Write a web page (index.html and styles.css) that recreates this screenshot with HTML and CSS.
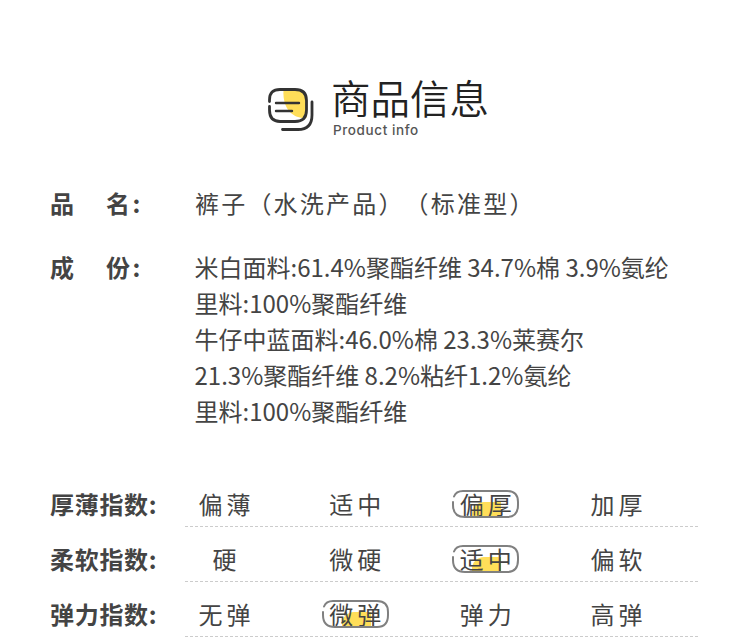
FILE: index.html
```html
<!DOCTYPE html>
<html lang="zh-CN">
<head>
<meta charset="utf-8">
<title>商品信息</title>
<link rel="stylesheet" href="styles.css">
</head>
<body>
<main class="page">
  <header class="head">
    <svg class="logo" width="50" height="50" viewBox="0 0 50 50" aria-hidden="true">
      <path class="logo-fill" d="M18.500 4.500H30C37 4.500 41.500 9 41.500 16V33C32 34 17 28 18.500 4.500Z"/>
      <path class="logo-line" d="M4.500 16.500V15C4.500 8 8 4.500 15 4.500H30C37.500 4.500 41.500 8.500 41.500 15.500V25C41.500 32.500 37.500 36.500 30 36.500H15C8 36.500 4.500 32.500 4.500 25V21.500"/>
      <path class="logo-line" d="M47 17V30C47 40 42 44.500 33 44.500H17.500"/>
      <path class="logo-bar" d="M11 18H34M11 26H27"/>
    </svg>
    <div class="head-text">
      <h1 class="title">商品信息</h1>
      <p class="sub">Product info</p>
    </div>
  </header>

  <dl class="info">
    <div class="info-row">
      <dt class="info-label"><span>品</span><span class="info-tail">名:</span></dt>
      <dd class="info-name">裤子（水洗产品）（标准型）</dd>
    </div>
    <div class="info-row info-row-gap">
      <dt class="info-label"><span>成</span><span class="info-tail">份:</span></dt>
      <dd class="info-text">米白面料:61.4%聚酯纤维 34.7%棉 3.9%氨纶<br>里料:100%聚酯纤维<br>牛仔中蓝面料:46.0%棉 23.3%莱赛尔<br>21.3%聚酯纤维 8.2%粘纤1.2%氨纶<br>里料:100%聚酯纤维</dd>
    </div>
  </dl>

  <section class="index">
    <div class="index-row">
      <div class="index-label">厚薄指数:</div>
      <div class="index-values">
        <span class="opt">偏薄</span>
        <span class="opt">适中</span>
        <span class="opt on"><svg class="pill" width="67" height="28" viewBox="0 0 67 28" aria-hidden="true"><path d="M2 6.500C3.500 2.500 6 1 11 1H55C62 1 66 5 66 12V15C66 23 62 27 55 27H13C5 27 1 23 1 15V12"/></svg>偏厚</span>
        <span class="opt">加厚</span>
      </div>
    </div>
    <div class="index-row">
      <div class="index-label">柔软指数:</div>
      <div class="index-values">
        <span class="opt">硬</span>
        <span class="opt">微硬</span>
        <span class="opt on"><svg class="pill" width="67" height="28" viewBox="0 0 67 28" aria-hidden="true"><path d="M2 6.500C3.500 2.500 6 1 11 1H55C62 1 66 5 66 12V15C66 23 62 27 55 27H13C5 27 1 23 1 15V12"/></svg>适中</span>
        <span class="opt">偏软</span>
      </div>
    </div>
    <div class="index-row">
      <div class="index-label">弹力指数:</div>
      <div class="index-values">
        <span class="opt">无弹</span>
        <span class="opt on"><svg class="pill" width="67" height="28" viewBox="0 0 67 28" aria-hidden="true"><path d="M2 6.500C3.500 2.500 6 1 11 1H55C62 1 66 5 66 12V15C66 23 62 27 55 27H13C5 27 1 23 1 15V12"/></svg>微弹</span>
        <span class="opt">弹力</span>
        <span class="opt">高弹</span>
      </div>
    </div>
  </section>
</main>
</body>
</html>
```
FILE: styles.css
```css
* { box-sizing: border-box; }
html, body { margin: 0; padding: 0; }
body {
  background: #fff;
  color: #444;
  font-family: "Noto Sans CJK SC", "Noto Sans", sans-serif;
  width: 750px;
  height: 642px;
  overflow: hidden;
}
.page { padding: 73px 52px 0 50px; }
.head {
  display: flex;
  align-items: flex-start;
  margin-left: 215px;
  gap: 16px;
}
.logo { margin-top: 12px; flex: none; }
.logo-fill { fill: #ffde59; }
.logo-line { fill: none; stroke: #333; stroke-width: 2.8; stroke-linecap: round; }
.logo-bar { fill: none; stroke: #333; stroke-width: 2.4; stroke-linecap: round; }
.head-text { display: flex; flex-direction: column; }
.title {
  margin: 0;
  font-size: 39.5px;
  line-height: 48px;
  font-weight: 350;
  color: #222;
}
.sub {
  margin: 2px 0 0 2px;
  font-family: Inter, sans-serif;
  font-size: 13.5px;
  line-height: 14px;
  font-weight: 500;
  color: #555;
  letter-spacing: 0.6px;
}
.info { margin: 48px 0 0; }
.info-row { display: flex; align-items: flex-start; }
.info-row-gap { margin-top: 28px; }
.info-label {
  width: 145px;
  flex: none;
  display: flex;
  font-size: 24px;
  line-height: 36px;
  font-weight: 700;
  color: #444;
  letter-spacing: 0.5px;
}
.info-label span:first-child { width: 56px; }
.info-tail { letter-spacing: 2.5px; }
.info-name {
  margin: 0;
  font-size: 24px;
  line-height: 36px;
  letter-spacing: 2.2px;
  text-spacing-trim: space-all;
  font-feature-settings: "chws" 0, "palt" 0;
}
.info-text {
  margin: 0 0 0 -0.5px;
  font-size: 24px;
  line-height: 36px;
}
.index { margin-top: 43px; }
.index-row { display: flex; height: 55px; }
.index-label {
  width: 135px;
  flex: none;
  font-size: 24px;
  line-height: 36px;
  font-weight: 700;
  padding-top: 14px;
  letter-spacing: 0.7px;
}
.index-values {
  width: 513px;
  display: grid;
  grid-template-columns: repeat(4, 80px);
  column-gap: 50.67px;
  align-items: start;
  height: 55px;
  padding-top: 14px;
  border-bottom: 1px dashed #ccc;
}
.opt {
  position: relative;
  text-align: center;
  font-size: 24px;
  line-height: 36px;
  letter-spacing: 4px;
  padding-left: 3px;
  z-index: 0;
}
.on::before {
  content: "";
  position: absolute;
  z-index: -1;
  left: 26px;
  bottom: 6px;
  width: 29px;
  height: 14px;
  background: #ffde59;
  border-radius: 12px 0 0 0;
}
.pill {
  position: absolute;
  left: 6px;
  top: 4px;
  fill: none;
  stroke: #808080;
  stroke-width: 2;
  stroke-linecap: round;
}
```
